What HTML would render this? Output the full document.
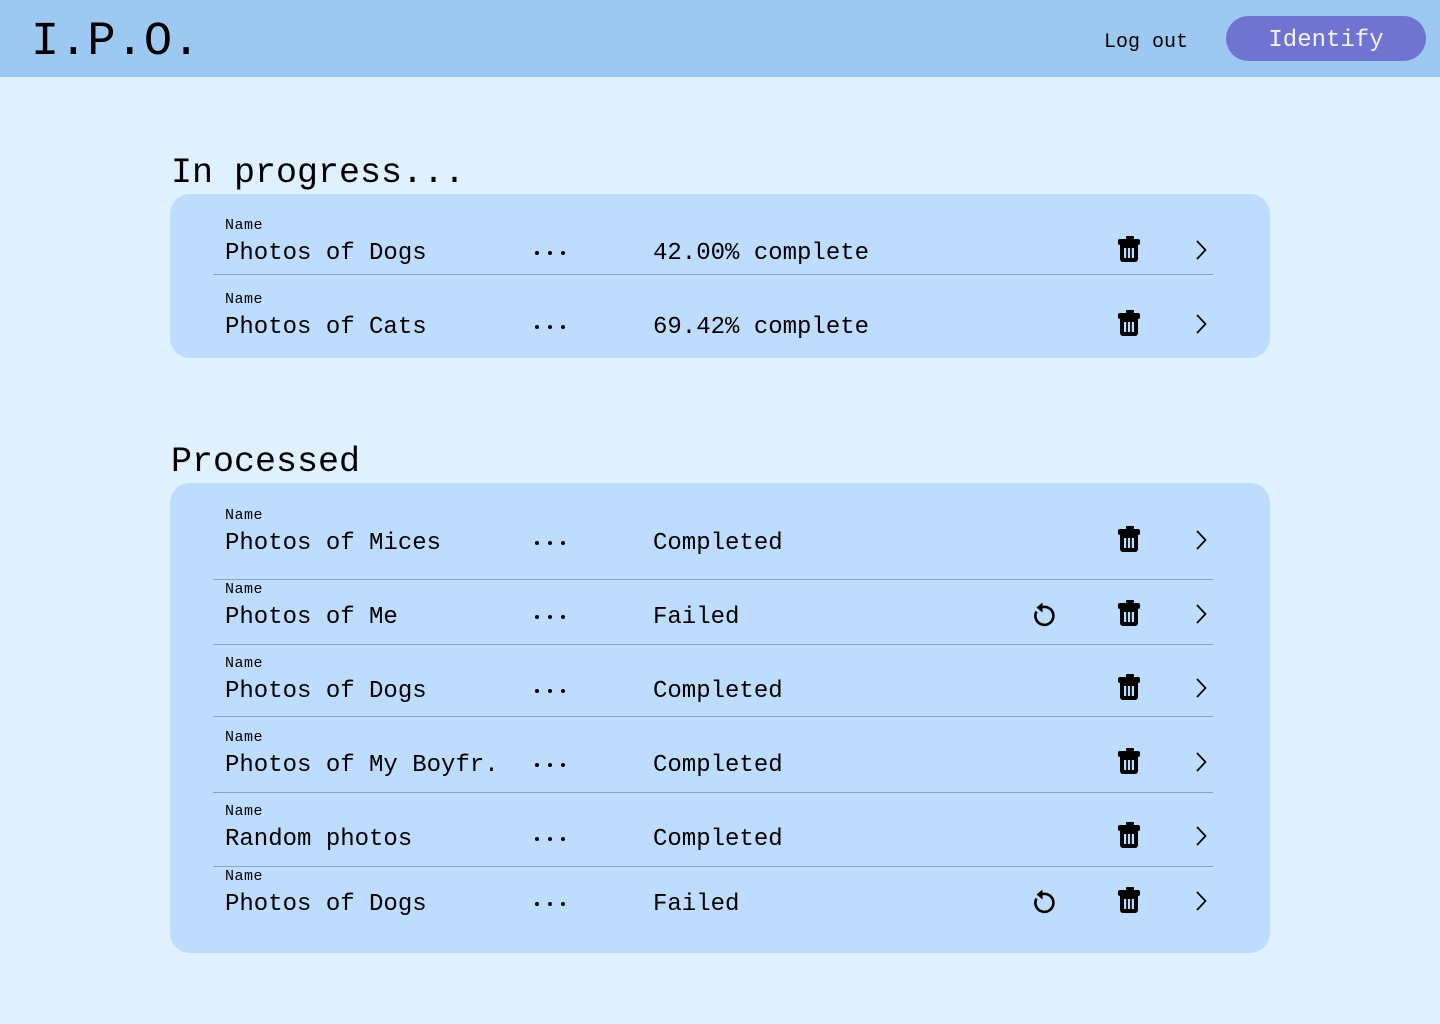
<!DOCTYPE html>
<html><head><meta charset="utf-8"><style>
*{margin:0;padding:0;box-sizing:border-box}
body{width:1440px;height:1024px;background:#dff0ff;font-family:"Liberation Mono",monospace;color:#000;position:relative;overflow:hidden}
.hdr{position:absolute;left:0;top:0;width:1440px;height:77px;background:#9cc8f2}
.logo{position:absolute;left:31px;top:16px;font-size:47px;line-height:54px}
.logout{position:absolute;left:1104px;top:31px;font-size:20px;line-height:24px}
.btn{position:absolute;left:1226px;top:16px;width:200px;height:45px;border-radius:23px;background:#7074d0;color:#f3f3ff;font-size:24px;line-height:49px;text-align:center}
h2{position:absolute;left:171px;font-size:35px;font-weight:normal;line-height:40px}
.card{position:absolute;left:170px;width:1100px;background:#bedcfd;border-radius:20px}
.row{position:absolute;left:0;width:1440px;height:0}
.lbl{position:absolute;left:225px;top:-34px;font-size:15px;line-height:18px;letter-spacing:0.5px}
.txt{position:absolute;left:225px;top:-10px;font-size:24px;line-height:26px}
.st{position:absolute;left:653px;top:-10px;font-size:24px;line-height:26px}
.dots{position:absolute;left:533px;top:-1px}
.tr{position:absolute;left:1117px;top:-15px}
.ch{position:absolute;left:1193px;top:-12px}
.rf{position:absolute;left:1029px;top:-14px}
.ln{position:absolute;left:213px;width:1000px;height:1px;background:#8ea3bb}
</style></head><body>
<div class="hdr"><div class="logo">I.P.O.</div><div class="logout">Log out</div><div class="btn">Identify</div></div>

<h2 style="top:153px">In progress...</h2>
<div class="card" style="top:194px;height:164px"></div>
<h2 style="top:442px">Processed</h2>
<div class="card" style="top:483px;height:470px"></div>

<div class="ln" style="top:274px"></div>
<div class="ln" style="top:579px"></div>
<div class="ln" style="top:644px"></div>
<div class="ln" style="top:716px"></div>
<div class="ln" style="top:792px"></div>
<div class="ln" style="top:866px"></div>

<svg width="0" height="0" style="position:absolute">
<defs>
<g id="trash"><rect x="9" y="0" width="8" height="3" rx="1" fill="#000"/><rect x="1" y="3" width="22" height="6" rx="2" fill="#000"/><path d="M3 8H21V23a3 3 0 0 1-3 3H6a3 3 0 0 1-3-3Z" fill="#000"/><rect x="7" y="12" width="2.2" height="10" fill="#bedcfd"/><rect x="10.9" y="12" width="2.2" height="10" fill="#bedcfd"/><rect x="14.8" y="12" width="2.2" height="10" fill="#bedcfd"/></g>
</defs></svg>

<div class="row" style="top:251px"><div class="lbl">Name</div><div class="txt">Photos of Dogs</div><svg class="dots" width="40" height="6"><circle cx="4" cy="3" r="2"/><circle cx="17" cy="3" r="2"/><circle cx="30" cy="3" r="2"/></svg><div class="st">42.00% complete</div><svg class="tr" width="26" height="28"><use href="#trash"/></svg><svg class="ch" width="16" height="22"><path d="M4 2l8.5 9-8.5 9" fill="none" stroke="#000" stroke-width="1.7"/></svg></div>

<div class="row" style="top:325px"><div class="lbl">Name</div><div class="txt">Photos of Cats</div><svg class="dots" width="40" height="6"><circle cx="4" cy="3" r="2"/><circle cx="17" cy="3" r="2"/><circle cx="30" cy="3" r="2"/></svg><div class="st">69.42% complete</div><svg class="tr" width="26" height="28"><use href="#trash"/></svg><svg class="ch" width="16" height="22"><path d="M4 2l8.5 9-8.5 9" fill="none" stroke="#000" stroke-width="1.7"/></svg></div>

<div class="row" style="top:541px"><div class="lbl">Name</div><div class="txt">Photos of Mices</div><svg class="dots" width="40" height="6"><circle cx="4" cy="3" r="2"/><circle cx="17" cy="3" r="2"/><circle cx="30" cy="3" r="2"/></svg><div class="st">Completed</div><svg class="tr" width="26" height="28"><use href="#trash"/></svg><svg class="ch" width="16" height="22"><path d="M4 2l8.5 9-8.5 9" fill="none" stroke="#000" stroke-width="1.7"/></svg></div>

<div class="row" style="top:615px"><div class="lbl">Name</div><div class="txt">Photos of Me</div><svg class="dots" width="40" height="6"><circle cx="4" cy="3" r="2"/><circle cx="17" cy="3" r="2"/><circle cx="30" cy="3" r="2"/></svg><div class="st">Failed</div><svg class="rf" width="26" height="28"><path d="M7.5 10.5A9 9 0 1 0 12 6.5" fill="none" stroke="#000" stroke-width="2.6"/><path d="M13.5 1.5L7.5 6.5l6 5z" fill="#000"/></svg><svg class="tr" width="26" height="28"><use href="#trash"/></svg><svg class="ch" width="16" height="22"><path d="M4 2l8.5 9-8.5 9" fill="none" stroke="#000" stroke-width="1.7"/></svg></div>

<div class="row" style="top:689px"><div class="lbl">Name</div><div class="txt">Photos of Dogs</div><svg class="dots" width="40" height="6"><circle cx="4" cy="3" r="2"/><circle cx="17" cy="3" r="2"/><circle cx="30" cy="3" r="2"/></svg><div class="st">Completed</div><svg class="tr" width="26" height="28"><use href="#trash"/></svg><svg class="ch" width="16" height="22"><path d="M4 2l8.5 9-8.5 9" fill="none" stroke="#000" stroke-width="1.7"/></svg></div>

<div class="row" style="top:763px"><div class="lbl">Name</div><div class="txt">Photos of My Boyfr.</div><svg class="dots" width="40" height="6"><circle cx="4" cy="3" r="2"/><circle cx="17" cy="3" r="2"/><circle cx="30" cy="3" r="2"/></svg><div class="st">Completed</div><svg class="tr" width="26" height="28"><use href="#trash"/></svg><svg class="ch" width="16" height="22"><path d="M4 2l8.5 9-8.5 9" fill="none" stroke="#000" stroke-width="1.7"/></svg></div>

<div class="row" style="top:837px"><div class="lbl">Name</div><div class="txt">Random photos</div><svg class="dots" width="40" height="6"><circle cx="4" cy="3" r="2"/><circle cx="17" cy="3" r="2"/><circle cx="30" cy="3" r="2"/></svg><div class="st">Completed</div><svg class="tr" width="26" height="28"><use href="#trash"/></svg><svg class="ch" width="16" height="22"><path d="M4 2l8.5 9-8.5 9" fill="none" stroke="#000" stroke-width="1.7"/></svg></div>

<div class="row" style="top:902px"><div class="lbl">Name</div><div class="txt">Photos of Dogs</div><svg class="dots" width="40" height="6"><circle cx="4" cy="3" r="2"/><circle cx="17" cy="3" r="2"/><circle cx="30" cy="3" r="2"/></svg><div class="st">Failed</div><svg class="rf" width="26" height="28"><path d="M7.5 10.5A9 9 0 1 0 12 6.5" fill="none" stroke="#000" stroke-width="2.6"/><path d="M13.5 1.5L7.5 6.5l6 5z" fill="#000"/></svg><svg class="tr" width="26" height="28"><use href="#trash"/></svg><svg class="ch" width="16" height="22"><path d="M4 2l8.5 9-8.5 9" fill="none" stroke="#000" stroke-width="1.7"/></svg></div>
</body></html>
